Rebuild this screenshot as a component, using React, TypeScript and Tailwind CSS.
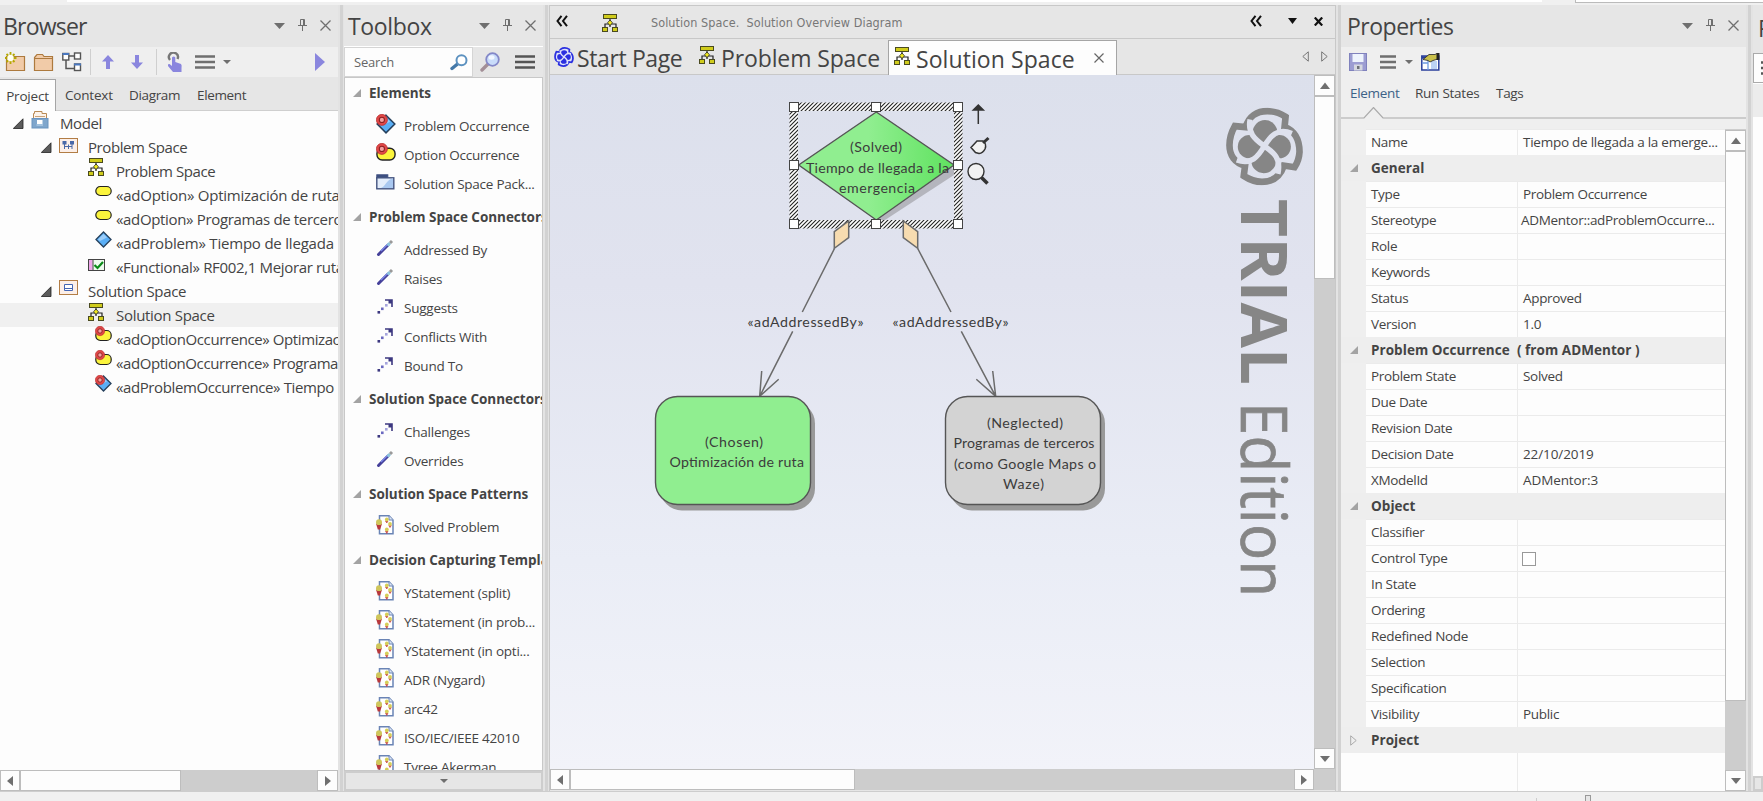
import React from "react";
import type { ReactNode } from "react";

/* ---------- small drawings ---------- */

function DiagramIcon({ className = "" }: { className?: string }) {
  return (
    <svg width="17" height="19" viewBox="0 0 17 19" className={`shrink-0 ${className}`}>
      <path d="M8 5v8M3 13v-3h11v3" fill="none" stroke="#222" strokeWidth="1.2" />
      <rect x="1.500" y="0.500" width="13" height="4" fill="#d0cc1c" stroke="#4a4a20" />
      <path d="M8 6l2.500 2.800-2.500 2.800L5.500 8.800z" fill="#f0e820" stroke="#222" strokeWidth="0.800" />
      <rect x="0.500" y="13.500" width="5" height="4" fill="#d0cc1c" stroke="#4a4a20" />
      <rect x="10.500" y="13.500" width="5" height="4" fill="#d0cc1c" stroke="#4a4a20" />
    </svg>
  );
}

function Swirl({ x = 0, y = 0, size, color, gap }: { x?: number; y?: number; size: number; color: string; gap: string }) {
  return (
    <svg x={x} y={y} width={size} height={size} viewBox="76 52 235 235" className="shrink-0">
      <path
        d="M257 80L254 110C284 122 299 150 299 186C298 204 293 218 284 232L252 227C240 262 216 276 186 276C166 276 146 268 131 258L135 227C104 219 88 196 88 166C88 142 96 122 104 108L137 111C146 78 172 63 202 63C222 63 242 70 257 80Z"
        fill={gap}
        stroke={color}
        strokeWidth="20"
      />
      <circle cx="195" cy="127" r="37" fill={color} />
      <circle cx="238" cy="170" r="35" fill={color} />
      <circle cx="191" cy="213" r="37" fill={color} />
      <circle cx="148" cy="170" r="35" fill={color} />
      <path
        d="M150 88C142 128 164 148 193 168C222 188 244 206 234 252M276 130C232 112 212 138 193 168C174 200 154 226 110 210"
        fill="none"
        stroke={gap}
        strokeWidth="16"
      />
    </svg>
  );
}

function Expander({ big = false }: { big?: boolean }) {
  return big ? (
    <svg width="11" height="11" viewBox="0 0 11 11" className="shrink-0">
      <path d="M10 0.800V10.500H0.300z" fill="#5c5c5c" stroke="#222" strokeWidth="0.800" />
    </svg>
  ) : (
    <svg width="8" height="8" viewBox="0 0 8 8" className="shrink-0">
      <path d="M8 0V8H0z" fill="#a3a3a3" />
    </svg>
  );
}

function Tri({ dir, className = "" }: { dir: "up" | "down" | "left" | "right"; className?: string }) {
  const d = { up: "M6 2.500L11 9H1z", down: "M1 3H11L6 9z", left: "M9 1V11L3 6z", right: "M3 1V11L9 6z" }[dir];
  return (
    <svg width="12" height="12" viewBox="0 0 12 12" className={`shrink-0 ${className}`}>
      <path d={d} fill="#6f6f6f" />
    </svg>
  );
}

function Caret({ color = "#6f6f6f", w = 11 }: { color?: string; w?: number }) {
  return (
    <svg width={w} height={w > 8 ? 6 : 4} viewBox="0 0 11 6" preserveAspectRatio="none" className="shrink-0">
      <path d="M0 0H11L5.500 6z" fill={color} />
    </svg>
  );
}

function PanelButtons() {
  return (
    <div className="flex items-center">
      <Caret />
      <svg width="9" height="12" viewBox="0 0 9 12" className="mb-[2px] ml-[13px] shrink-0">
        <path d="M2.500 0.500H6.500V6.500M2.500 0.500V6.500M5.500 0.500V6M0 6.500H9M4.500 7V12" fill="none" stroke="#6f6f6f" />
      </svg>
      <svg width="11" height="11" viewBox="0 0 11 11" className="mb-px ml-[13px] shrink-0">
        <path d="M0.500 0.500L10.500 10.500M10.500 0.500L0.500 10.500" stroke="#6f6f6f" strokeWidth="1.300" />
      </svg>
    </div>
  );
}

function Hamburger({ w, color = "#6f6f6f" }: { w: number; color?: string }) {
  return (
    <svg width={w} height="14" viewBox="0 0 20 14" preserveAspectRatio="none" className="shrink-0">
      <path d="M0 1.500H20M0 7H20M0 12.500H20" stroke={color} strokeWidth="2.600" />
    </svg>
  );
}

function RedDot() {
  return (
    <>
      <circle cx="5" cy="5" r="4.700" fill="#e04848" stroke="#b52a2a" strokeWidth="0.600" />
      <circle cx="5" cy="5" r="2.200" fill="#f4a0a0" stroke="#8c2020" strokeWidth="0.900" />
    </>
  );
}

function OptionIcon({ dot = false, size = 17 }: { dot?: boolean; size?: number }) {
  return (
    <svg width={size} height={size} viewBox="0 0 17 17" className="shrink-0">
      <rect x="0.800" y={dot ? 4.5 : 1.5} width="15.400" height={dot ? 10 : 9} rx="4.500" fill="#fbf43c" stroke="#222" strokeWidth="1.200" />
      {dot && <RedDot />}
    </svg>
  );
}

function ProblemIcon({ dot = false, size = 17 }: { dot?: boolean; size?: number }) {
  return (
    <svg width={size} height={size} viewBox="0 0 17 17" className="shrink-0">
      <path d="M8.500 1L16 8.500L8.500 16L1 8.500z" fill="#5aaef5" stroke="#26405c" strokeWidth="1.300" />
      <path d="M8.500 3L12 6.500L5 10L3 8.500z" fill="#9ccdf9" />
      {dot && <RedDot />}
    </svg>
  );
}

function FunctionalIcon() {
  return (
    <svg width="17" height="13" viewBox="0 0 17 13" className="shrink-0">
      <rect x="0.500" y="0.500" width="16" height="11" fill="#eefbee" stroke="#444" />
      <rect x="1" y="1" width="3.500" height="10" fill="#efa6ea" />
      <path d="M5 1V11.500" stroke="#444" />
      <path d="M6.500 6L9.500 9L15 3" fill="none" stroke="#0a8a18" strokeWidth="2.200" />
    </svg>
  );
}

function ModelIcon() {
  return (
    <svg width="18" height="19" viewBox="0 0 18 19" className="shrink-0">
      <path d="M2.500 10V3.500H3.500V1.500H11V3.500H15.500V10" fill="#fdf3ea" stroke="#b98a55" />
      <path d="M4 6.500H14" stroke="#c9a37a" />
      <rect x="1" y="8.500" width="16" height="9.500" fill="#7fa6cc" stroke="#6a94bf" />
      <rect x="6" y="10" width="5.500" height="4" fill="#fff" />
      <path d="M5.500 15H12" stroke="#c5dcf0" />
    </svg>
  );
}

function PackageIcon({ kind }: { kind: "problem" | "solution" }) {
  return (
    <svg width="19" height="15" viewBox="0 0 19 15" className="shrink-0">
      <rect x="0.500" y="0.500" width="18" height="14" fill="#fcefe8" stroke="#b27d45" />
      {kind === "problem" ? (
        <>
          <rect x="3.500" y="3" width="4" height="3.500" fill="#4a69a8" />
          <rect x="11" y="3" width="4" height="3.500" fill="#4a69a8" />
          <path d="M5.500 6V11M5.500 8.500H13M13 6V11M9.500 8.500V6.500M9.500 8.500V11" fill="none" stroke="#4a69a8" />
        </>
      ) : (
        <path d="M5.500 4.500H13.500V10.500H5.500zM5.500 8.500H13.500" fill="#fff" stroke="#4466b5" />
      )}
    </svg>
  );
}

function FolderIcon({ star = false }: { star?: boolean }) {
  return (
    <svg width="21" height="20" viewBox="0 0 21 20" className="shrink-0">
      {star ? (
        <path d="M1.500 18.500V4.500H19.500V18.500z" fill="#f1cba8" stroke="#ad7a3e" strokeWidth="1.200" />
      ) : (
        <path d="M1.500 18.500V5.500L4 2.500H9.500L11 4.500H19.500V18.500zM2 6.500H19" fill="#f1cba8" stroke="#ad7a3e" strokeWidth="1.200" />
      )}
      {star && (
        <>
          <path d="M5.500 0V12M-0.500 6H11.500M1.500 2L9.500 10M9.500 2L1.500 10" stroke="#b5a800" strokeWidth="1.800" />
          <circle cx="5.500" cy="6" r="3.200" fill="#fffef0" />
        </>
      )}
    </svg>
  );
}

function StickIcon() {
  return (
    <svg width="18" height="18" viewBox="0 0 18 18" className="shrink-0">
      <path d="M2.500 15.500L12 6" stroke="#45409a" strokeWidth="3" strokeLinecap="round" />
      <path d="M5 12L12 5" stroke="#7a86e8" strokeWidth="1.200" />
      <path d="M11.500 6.500L14 4" stroke="#8cc4dd" strokeWidth="3" />
      <path d="M14 4L16 2" stroke="#9a9a9a" strokeWidth="3" />
    </svg>
  );
}

function DotsIcon() {
  return (
    <svg width="18" height="18" viewBox="0 0 18 18" className="shrink-0">
      <rect x="1.500" y="14" width="2.600" height="2.600" fill="#3c3880" />
      <rect x="5" y="10.500" width="2.600" height="2.600" fill="#6a68c0" />
      <rect x="9" y="7" width="2.600" height="2.600" fill="#a5a4dc" />
      <path d="M9 3H16V10" fill="none" stroke="#3c3880" strokeWidth="1.600" />
      <rect x="12.500" y="3" width="3.500" height="3.500" fill="#3c3880" />
    </svg>
  );
}

function SolutionPackIcon() {
  return (
    <svg width="19" height="16" viewBox="0 0 19 16" className="shrink-0">
      <rect x="0.800" y="0.800" width="11" height="4" fill="#3d4f80" stroke="#3d4f80" />
      <rect x="0.800" y="3.800" width="17" height="11" fill="#e3edfb" stroke="#43537f" strokeWidth="1.400" />
      <path d="M17 4.500V14H5C9 13 11 5 17 4.500z" fill="#a9c8f0" />
    </svg>
  );
}

function PatternIcon() {
  return (
    <svg width="18" height="20" viewBox="0 0 18 20" className="shrink-0">
      <path d="M3.500 0.800H13L17 5V18.800H3.500z" fill="#fff" stroke="#6a84b5" strokeWidth="1.500" />
      <path d="M13 0.800V5H17" fill="#dbe5f5" stroke="#6a84b5" />
      <path d="M0 8.500H6L4.200 14.500H1.800z" fill="#b8383c" />
      <ellipse cx="3" cy="7.200" rx="3" ry="2.900" fill="#cfc65a" />
      <path d="M9.500 6H12L10.800 8zM12.800 10.500H15.300L14 12.500zM9.500 16H12L10.800 18.500z" fill="#c83c40" stroke="#c83c40" strokeWidth="0.600" />
      <circle cx="10.800" cy="4.500" r="1.900" fill="#d6cf58" />
      <circle cx="14" cy="9" r="1.900" fill="#d6cf58" />
      <circle cx="10.800" cy="14.500" r="1.900" fill="#d6cf58" />
    </svg>
  );
}

function Magnifier({ fancy = false }: { fancy?: boolean }) {
  return fancy ? (
    <svg width="20" height="20" viewBox="0 0 20 20" className="shrink-0">
      <path d="M2 18L9 11" stroke="#a38f97" strokeWidth="3.400" strokeLinecap="round" />
      <circle cx="12.500" cy="7.500" r="6.300" fill="#c9dcfa" stroke="#8488c8" strokeWidth="1.800" />
      <ellipse cx="11.500" cy="5.500" rx="3" ry="2.200" fill="#f2f7ff" />
    </svg>
  ) : (
    <svg width="18" height="17" viewBox="0 0 18 17" className="shrink-0">
      <path d="M2 14.500L7.500 10" stroke="#4478a8" strokeWidth="3.400" strokeLinecap="round" />
      <circle cx="11.500" cy="6.300" r="5" fill="#fff" stroke="#5d92c0" strokeWidth="2" />
    </svg>
  );
}

/* ---------- shared pieces ---------- */

function PanelTitle({ text, className = "" }: { text: string; className?: string }) {
  return (
    <div className="flex h-[42px] shrink-0 items-center justify-between bg-[#e6e6e6] pr-[7px]">
      <span className={`text-[23px] leading-[30px] ${className}`}>{text}</span>
      <PanelButtons />
    </div>
  );
}

function Splitter({ className = "" }: { className?: string }) {
  return (
    <div className={`flex shrink-0 bg-[#e3e3e3] ${className}`}>
      <div className="ml-[2px] w-[3px] bg-[#d2d2d2]" />
    </div>
  );
}

function ScrollButton({ dir, className = "" }: { dir: "up" | "down" | "left" | "right"; className?: string }) {
  return (
    <div className={`flex shrink-0 items-center justify-center border border-[#bdbdbd] bg-[#fdfdfd] ${className}`}>
      <Tri dir={dir} />
    </div>
  );
}

/* ---------- browser ---------- */

type TreeRow = { pad: string; iconW: string; icon: ReactNode; text: string; open?: boolean; selected?: boolean; width?: string };

const tree: TreeRow[] = [
  { pad: "pl-[13px]", iconW: "w-[29px] pb-2", icon: <ModelIcon />, text: "Model", open: true },
  { pad: "pl-[41px]", iconW: "w-[29px] pb-[3px]", icon: <PackageIcon kind="problem" />, text: "Problem Space", open: true },
  { pad: "pl-[88px]", iconW: "w-[28px] pb-2", icon: <DiagramIcon />, text: "Problem Space" },
  { pad: "pl-[95px]", iconW: "w-[21px] pb-[4px]", icon: <OptionIcon />, text: "«adOption» Optimización de ruta", width: "tracking-[-0.24px]" },
  { pad: "pl-[95px]", iconW: "w-[21px] pb-[4px]", icon: <OptionIcon />, text: "«adOption» Programas de terceros", width: "tracking-[-0.34px]" },
  { pad: "pl-[95px]", iconW: "w-[21px] pb-[8px]", icon: <ProblemIcon />, text: "«adProblem» Tiempo de llegada", width: "tracking-[-0.2px]" },
  { pad: "pl-[88px]", iconW: "w-[28px] pb-[4px]", icon: <FunctionalIcon />, text: "«Functional» RF002,1 Mejorar rutas", width: "tracking-[-0.34px]" },
  { pad: "pl-[41px]", iconW: "w-[29px] pb-[7px]", icon: <PackageIcon kind="solution" />, text: "Solution Space", open: true, width: "tracking-[-0.34px]" },
  { pad: "pl-[88px]", iconW: "w-[28px] pb-[5px]", icon: <DiagramIcon />, text: "Solution Space", selected: true, width: "tracking-[-0.3px]" },
  { pad: "pl-[95px]", iconW: "w-[21px] pb-[9px]", icon: <OptionIcon dot />, text: "«adOptionOccurrence» Optimización", width: "tracking-[-0.4px]" },
  { pad: "pl-[95px]", iconW: "w-[21px] pb-[9px]", icon: <OptionIcon dot />, text: "«adOptionOccurrence» Programas", width: "tracking-[-0.42px]" },
  { pad: "pl-[95px]", iconW: "w-[21px] pb-[8px]", icon: <ProblemIcon dot />, text: "«adProblemOccurrence» Tiempo", width: "tracking-[-0.4px]" },
];

function Browser() {
  return (
    <section className="flex w-[338px] shrink-0 flex-col bg-[#fdfdfd]">
      <PanelTitle text="Browser" className="pl-[3px] tracking-[-0.8px]" />
      <div className="flex h-[30px] shrink-0 items-center bg-[#efefef] pr-[13px] pl-[5px]">
        <FolderIcon star />
        <span className="w-[7px]" />
        <FolderIcon />
        <svg width="20" height="20" viewBox="0 0 20 20" className="ml-[8px] shrink-0">
          <path d="M7 4H12M4 7V16.500H12" fill="none" stroke="#555" strokeWidth="1.500" />
          <rect x="0.800" y="1.500" width="6" height="6.500" fill="#fff" stroke="#555" strokeWidth="1.400" />
          <rect x="12.500" y="1" width="6" height="6" fill="#fff" stroke="#555" strokeWidth="1.400" />
          <rect x="12.500" y="12" width="6" height="6.500" fill="#fff" stroke="#555" strokeWidth="1.400" />
          <path d="M0.500 2H7M12 12.500H19" stroke="#4a78c0" strokeWidth="2" />
        </svg>
        <span className="ml-[8px] h-[26px] w-px bg-[#cfcfcf]" />
        <svg width="12" height="14" viewBox="0 0 12 14" className="ml-[11px] shrink-0">
          <path d="M6 0L12 6.500H8V14H4V6.500H0z" fill="#8a86de" />
        </svg>
        <svg width="12" height="14" viewBox="0 0 12 14" className="ml-[17px] shrink-0">
          <path d="M6 14L12 7.500H8V0H4V7.500H0z" fill="#8a86de" />
        </svg>
        <span className="ml-[13px] h-[26px] w-px bg-[#cfcfcf]" />
        <svg width="16" height="20" viewBox="0 0 16 20" className="ml-[10px] shrink-0">
          <path d="M3 8A4.500 4.500 0 1 1 10.500 7" fill="none" stroke="#777" strokeWidth="2.400" />
          <path d="M5 5.500Q6.800 3.500 8.300 5.500V10L14 12Q15 13 14.500 16V20H6L1 14Q0.500 11.500 2.500 12L5 14z" fill="#8a86de" />
        </svg>
        <span className="w-[12px]" />
        <Hamburger w={20} />
        <span className="w-[8px]" />
        <Caret w={8} />
        <svg width="10" height="18" viewBox="0 0 10 18" className="ml-auto shrink-0">
          <path d="M0 0L10 9L0 18z" fill="#8a86de" />
        </svg>
      </div>
      <div className="flex h-[34px] shrink-0 items-end bg-[#e6e6e6] text-[13.5px] leading-[18px]">
        <div className="flex h-[32px] w-[56px] items-center justify-center border-t border-r border-[#a5a5a5] bg-[#fdfdfd] pt-px tracking-[-0.2px]">
          Project
        </div>
        <div className="flex h-[32px] flex-1 items-center border-b border-[#cfcfcf] pl-[9px]">
          <span className="w-[64px] tracking-[-0.2px]">Context</span>
          <span className="w-[68px] tracking-[-0.35px]">Diagram</span>
          <span className="tracking-[-0.35px]">Element</span>
        </div>
      </div>
      <div className="flex min-h-0 flex-1 flex-col overflow-hidden text-[15px]">
        {tree.map((r, i) => (
          <div key={i} className={`flex h-[24px] shrink-0 items-center whitespace-nowrap ${r.pad} ${r.selected ? "bg-[#f0f0f0]" : ""}`}>
            {r.open && (
              <span className="w-[18px] shrink-0">
                <Expander big />
              </span>
            )}
            <span className={`flex shrink-0 items-center ${r.iconW}`}>{r.icon}</span>
            <span className={`leading-[22px] ${r.width ?? "tracking-[-0.42px]"}`}>{r.text}</span>
          </div>
        ))}
      </div>
      <div className="flex h-[21px] shrink-0 bg-[#cdcdcd]">
        <ScrollButton dir="left" className="w-[20px]" />
        <div className="w-[161px] border border-[#bdbdbd] bg-[#fdfdfd]" />
        <ScrollButton dir="right" className="ml-auto w-[21px]" />
      </div>
    </section>
  );
}

/* ---------- toolbox ---------- */

const toolGroups: { title: string; first?: boolean; items: [ReactNode, string][] }[] = [
  {
    title: "Elements",
    first: true,
    items: [
      [<ProblemIcon dot size={20} />, "Problem Occurrence"],
      [<OptionIcon dot size={20} />, "Option Occurrence"],
      [<SolutionPackIcon />, "Solution Space Pack..."],
    ],
  },
  {
    title: "Problem Space Connectors",
    items: [
      [<StickIcon />, "Addressed By"],
      [<StickIcon />, "Raises"],
      [<DotsIcon />, "Suggests"],
      [<DotsIcon />, "Conflicts With"],
      [<DotsIcon />, "Bound To"],
    ],
  },
  {
    title: "Solution Space Connectors",
    items: [
      [<DotsIcon />, "Challenges"],
      [<StickIcon />, "Overrides"],
    ],
  },
  { title: "Solution Space Patterns", items: [[<PatternIcon />, "Solved Problem"]] },
  {
    title: "Decision Capturing Templates",
    items: [
      [<PatternIcon />, "YStatement (split)"],
      [<PatternIcon />, "YStatement (in prob..."],
      [<PatternIcon />, "YStatement (in opti..."],
      [<PatternIcon />, "ADR (Nygard)"],
      [<PatternIcon />, "arc42"],
      [<PatternIcon />, "ISO/IEC/IEEE 42010"],
      [<PatternIcon />, "Tyree Akerman"],
    ],
  },
];

function Toolbox() {
  return (
    <section className="flex w-[199px] shrink-0 flex-col bg-[#e6e6e6]">
      <div className="flex h-[42px] shrink-0 items-center justify-between border-b border-white bg-[#e6e6e6] pr-[7px] pl-[4px]">
        <span className="pt-px text-[23px] leading-[30px] tracking-[-0.35px]">Toolbox</span>
        <PanelButtons />
      </div>
      <div className="flex h-[30px] shrink-0 items-center">
        <div className="flex h-[30px] w-[129px] items-center justify-between border border-[#d5d5d5] bg-[#fdfdfd] pr-[4px] pl-[9px] text-[13px] tracking-[-0.2px] text-[#666]">
          <span className="pt-px">Search</span>
          <Magnifier />
        </div>
        <span className="w-[7px]" />
        <Magnifier fancy />
        <span className="w-[15px]" />
        <Hamburger w={20} color="#555" />
      </div>
      <div className="flex min-h-0 flex-1 flex-col overflow-hidden border border-[#c8c8c8] bg-[#fdfdfd] text-[13.5px]">
        {toolGroups.map((g) => (
          <div key={g.title} className="shrink-0">
            <div
              className={`flex items-center pl-[8px] font-bold whitespace-nowrap tracking-[-0.04px] ${g.first ? "h-[33px] pb-[3px]" : "h-[37px]"}`}
            >
              <Expander />
              <span className="ml-[8px] leading-[20px]">{g.title}</span>
            </div>
            {g.items.map(([icon, text]) => (
              <div key={text} className="flex h-[29px] items-center whitespace-nowrap">
                <span className="flex w-[59px] shrink-0 items-center pb-[3px] pl-[31px]">{icon}</span>
                <span className="leading-[20px] tracking-[-0.24px]">{text}</span>
              </div>
            ))}
          </div>
        ))}
      </div>
      <div className="flex h-[20px] shrink-0 items-center justify-center border-2 border-[#cdcdcd] bg-[#e6e6e6]">
        <Caret w={8} />
      </div>
    </section>
  );
}

/* ---------- diagram editor ---------- */

function Chevrons() {
  return (
    <svg width="13" height="12" viewBox="0 0 13 12" className="shrink-0">
      <path d="M5.500 0.800L1.500 6L5.500 11.200M11 0.800L7 6L11 11.200" fill="none" stroke="#111" strokeWidth="2" />
    </svg>
  );
}

type Label = [string, number, number, number];

const labels: Label[] = [
  ["(Solved)", 850, 152, 52],
  ["Tiempo de llegada a la", 806, 173, 143],
  ["emergencia", 839, 193, 76],
  ["«adAddressedBy»", 747.5, 327, 116],
  ["«adAddressedBy»", 892.5, 327, 116],
  ["(Chosen)", 705, 447, 58],
  ["Optimización de ruta", 669.5, 467, 134.5],
  ["(Neglected)", 987, 428, 76],
  ["Programas de terceros", 953.5, 448, 141],
  ["(como Google Maps o", 954, 469, 142],
  ["Waze)", 1003, 489, 41],
];

function Canvas() {
  const handles = [794, 876, 958].flatMap((x) => [107, 165, 224].map((y) => [x, y])).filter(([x, y]) => !(x === 876 && y === 165));
  return (
    <svg width="764" height="694" viewBox="550 75 764 694" className="block shrink-0">
      <defs>
        <linearGradient id="sky" x1="0" y1="0" x2="0" y2="1">
          <stop offset="0" stopColor="#dce0ec" />
          <stop offset="0.3" stopColor="#e1e3ef" />
          <stop offset="0.7" stopColor="#eaedf6" />
          <stop offset="1" stopColor="#f2f3f9" />
        </linearGradient>
        <linearGradient id="solved" x1="0" y1="0" x2="1" y2="0">
          <stop offset="0.45" stopColor="#90ee90" />
          <stop offset="1" stopColor="#5fe25f" />
        </linearGradient>
        <pattern id="hatch" width="4" height="4" patternUnits="userSpaceOnUse">
          <rect width="4" height="4" fill="#fff" />
          <path d="M-1 1L1 -1M0 4L4 0M3 5L5 3" stroke="#222" strokeWidth="1.100" />
        </pattern>
      </defs>
      <rect x="550" y="75" width="764" height="694" fill="url(#sky)" />

      <Swirl x={1225.5} y={107.5} size={78} color="#868686" gap="#dee1ed" />
      <g fill="#868686" fontFamily="'Open Sans', 'Noto Sans', sans-serif" fontSize="64">
        <text transform="translate(1240.5 199) rotate(90)" fontWeight="700" textLength="186" lengthAdjust="spacingAndGlyphs">
          TRIAL
        </text>
        <text
          transform="translate(1240.5 402) rotate(90)"
          stroke="#868686"
          strokeWidth="0.700"
          textLength="195"
          lengthAdjust="spacingAndGlyphs"
        >
          Edition
        </text>
      </g>

      <path d="M881 118L954 170V175L885 220H876z" fill="#b4b5bd" />
      <path d="M876.300 112L954 165L876.300 220L798.700 165z" fill="url(#solved)" stroke="#555" strokeWidth="1.400" />
      <path d="M789.500 102.500H962.500V228.500H789.500zM798 111V220H954V111z" fill="url(#hatch)" fillRule="evenodd" />

      <g fill="none" stroke="#6b6b6b" strokeWidth="1.500">
        <path d="M834.500 248.500L802.300 312M792.700 331.300L759.700 396.300M761.700 371L759.700 396.300L778.700 379.300" />
        <path d="M917.700 248.500L951 312M961.300 331.300L995.700 396.300M992.700 371L995.700 396.300L976.300 379.300" />
        <path d="M848.700 221V237.700L834.300 248.300V231.700z" fill="#f7dcb0" />
        <path d="M903.300 221L917.700 231.700V248.300L903.300 237.700z" fill="#f7dcb0" />
      </g>
      {handles.map(([x, y]) => (
        <rect key={`${x}-${y}`} x={x - 4.5} y={y - 4.5} width="9" height="9" fill="#fff" stroke="#444" />
      ))}

      <rect x="660" y="401.500" width="155" height="109" rx="22" fill="#999" />
      <rect x="655.500" y="396.500" width="155" height="108" rx="22" fill="#90ee90" stroke="#555" strokeWidth="1.400" />
      <rect x="950" y="401.500" width="155" height="109" rx="22" fill="#999" />
      <rect x="945.500" y="396.500" width="155" height="108" rx="22" fill="#d3d3d3" stroke="#555" strokeWidth="1.400" />

      <g fill="#3c3c3c" fontFamily="Lato, 'Open Sans', sans-serif" fontSize="14.200">
        {labels.map(([t, x, y, w], i) => (
          <text key={i} x={x} y={y} textLength={w} lengthAdjust="spacing">
            {t}
          </text>
        ))}
      </g>

      <path d="M978.300 124V107M973.300 110L978.300 105L983.300 110z" stroke="#333" strokeWidth="1.500" fill="#333" />
      <path d="M971 147.500L977 141L983 141Q987 144 985 149Q983 153 979 153.500L975.500 152.500z" fill="#f2f2f2" stroke="#333" strokeWidth="1.500" />
      <path d="M983 143L988.500 138" stroke="#333" strokeWidth="3" />
      <path d="M981.500 177.500L987.500 183.500" stroke="#333" strokeWidth="3.600" />
      <circle cx="976" cy="171.500" r="8" fill="#f2f2f2" stroke="#333" strokeWidth="1.400" />
    </svg>
  );
}

function Editor() {
  return (
    <section className="flex w-[787px] shrink-0 flex-col border-x border-t border-[#c8c8c8] bg-[#e6e6e6]">
      <div className="flex h-[33px] shrink-0 items-center border-b border-[#c8c8c8] pr-[12px] pb-[2px] pl-[6px]">
        <Chevrons />
        <DiagramIcon className="mt-[5px] ml-[33px]" />
        <span className="mt-[5px] ml-[32px] font-['DejaVu_Sans_Condensed','Open_Sans',sans-serif] text-[12.5px] whitespace-pre text-[#777] tracking-[0.07px]">
          {"Solution Space.  Solution Overview Diagram"}
        </span>
        <span className="flex-1" />
        <Chevrons />
        <span className="w-[25px]" />
        <Caret color="#111" w={9} />
        <svg width="9" height="9" viewBox="0 0 9 9" className="ml-[17px] shrink-0">
          <path d="M0.800 0.500L8.200 8.500M8.200 0.500L0.800 8.500" stroke="#111" strokeWidth="2.200" />
        </svg>
      </div>
      <div className="flex h-[36px] shrink-0 text-[23px] leading-[30px]">
        <div className="flex items-center border-b border-[#c8c8c8] pl-[4px]">
          <Swirl size={20} color="#2a2fe0" gap="#dfe2fb" />
          <span className="ml-[3px] w-[121px] pt-[2px] tracking-[-0.38px]">Start Page</span>
          <DiagramIcon className="mr-[5px] mb-[3px] ml-px" />
          <span className="w-[167px] pt-[2px] tracking-[-0.12px]">Problem Space</span>
        </div>
        <div className="mt-px flex w-[229px] items-center border-x border-t border-[#a5a5a5] bg-[#fdfdfd] pl-[5px]">
          <DiagramIcon className="mr-[5px] mb-[3px]" />
          <span className="pt-[2px] tracking-[0.08px]">Solution Space</span>
          <svg width="10" height="10" viewBox="0 0 10 10" className="ml-[19px] shrink-0">
            <path d="M0.500 0.500L9.500 9.500M9.500 0.500L0.500 9.500" stroke="#666" strokeWidth="1.200" />
          </svg>
        </div>
        <div className="flex flex-1 items-center justify-end gap-[12px] border-b border-[#c8c8c8] pr-[7px]">
          <svg width="7" height="11" viewBox="0 0 7 11">
            <path d="M6.300 0.800V10.200L0.800 5.500z" fill="none" stroke="#777" />
          </svg>
          <svg width="7" height="11" viewBox="0 0 7 11">
            <path d="M0.700 0.800V10.200L6.200 5.500z" fill="none" stroke="#777" />
          </svg>
        </div>
      </div>
      <div className="flex h-[694px] shrink-0 bg-[#cdcdcd]">
        <Canvas />
        <div className="flex w-[21px] flex-col">
          <ScrollButton dir="up" className="h-[21px]" />
          <div className="h-[183px] border border-[#bdbdbd] bg-[#fdfdfd]" />
          <ScrollButton dir="down" className="mt-auto h-[21px]" />
        </div>
      </div>
      <div className="flex h-[21px] shrink-0 bg-[#cdcdcd]">
        <ScrollButton dir="left" className="w-[20px]" />
        <div className="w-[285px] border border-[#bdbdbd] bg-[#fdfdfd]" />
        <ScrollButton dir="right" className="mr-[21px] ml-auto w-[20px]" />
      </div>
    </section>
  );
}

/* ---------- properties ---------- */

type Prop = { k: string; v?: ReactNode; head?: boolean; closed?: boolean };

const props: Prop[] = [
  { k: "Name", v: <span className="tracking-[-0.25px]">Tiempo de llegada a la emerge...</span> },
  { k: "General", head: true },
  { k: "Type", v: "Problem Occurrence" },
  { k: "Stereotype", v: <span className="-ml-[2px] tracking-[-0.3px]">ADMentor::adProblemOccurre...</span> },
  { k: "Role" },
  { k: "Keywords" },
  { k: "Status", v: "Approved" },
  { k: "Version", v: "1.0" },
  { k: "Problem Occurrence  ( from ADMentor )", head: true },
  { k: "Problem State", v: "Solved" },
  { k: "Due Date" },
  { k: "Revision Date" },
  { k: "Decision Date", v: <span className="tracking-[-0.1px]">22/10/2019</span> },
  { k: "XModelId", v: <span className="tracking-[-0.1px]">ADMentor:3</span> },
  { k: "Object", head: true },
  { k: "Classifier" },
  { k: "Control Type", v: <span className="-ml-px block h-[14px] w-[14px] border border-[#999] bg-white" /> },
  { k: "In State" },
  { k: "Ordering" },
  { k: "Redefined Node" },
  { k: "Selection" },
  { k: "Specification" },
  { k: "Visibility", v: "Public" },
  { k: "Project", head: true, closed: true },
];

function Properties() {
  return (
    <section className="flex w-[405px] shrink-0 flex-col bg-[#efefef]">
      <PanelTitle text="Properties" className="pl-[6px] tracking-[-0.5px]" />
      <div className="flex h-[30px] shrink-0 items-center pl-[8px]">
        <svg width="18" height="18" viewBox="0 0 18 18" className="shrink-0">
          <rect x="0.500" y="0.500" width="17" height="17" fill="#9c9dd2" stroke="#8082bd" />
          <rect x="3.500" y="1" width="11" height="8" fill="#eef4fd" />
          <rect x="5" y="11.500" width="8.500" height="6" fill="#d5d8e0" />
          <rect x="8" y="13" width="2.500" height="3" fill="#6d7078" />
        </svg>
        <span className="w-[13px]" />
        <Hamburger w={16} />
        <span className="w-[9px]" />
        <Caret w={8} />
        <svg width="19" height="18" viewBox="0 0 19 18" className="ml-[8px] shrink-0">
          <rect x="0.800" y="3" width="17" height="14" fill="#fff" stroke="#2a3f9c" strokeWidth="1.500" />
          <path d="M1 4.500H18" stroke="#2a3f9c" strokeWidth="2.500" />
          <path d="M7 6V17M1 10H7" stroke="#6f9be0" strokeWidth="1.300" />
          <rect x="10" y="8" width="6" height="8" fill="#bcd3f5" />
          <path d="M2 6.500L8 1.500H14L17 0V6L12 7.500L9 9L7 7.500z" fill="#c9c04a" stroke="#333" strokeWidth="0.900" />
          <path d="M15.500 0H18.500V7H15.500z" fill="#222" />
        </svg>
      </div>
      <div className="flex h-[30px] shrink-0 items-center pt-[2px] pl-[9px] text-[13.5px]">
        <span className="w-[65px] tracking-[-0.3px] text-[#3d6287]">Element</span>
        <span className="w-[81px] tracking-[-0.25px]">Run States</span>
        <span className="tracking-[-0.3px]">Tags</span>
      </div>
      <svg width="405" height="22" viewBox="0 0 405 22" className="block shrink-0">
        <path d="M0 11H23L32.500 0.500L42 11H405" fill="none" stroke="#aaa" strokeWidth="1.200" />
      </svg>
      <div className="flex min-h-0 flex-1 text-[13.5px]">
        <div className="flex w-[384px] flex-col">
          {props.map((p) =>
            p.head ? (
              <div key={p.k} className="flex h-[26px] shrink-0 items-center bg-[#eeeeee] pl-[9px] font-bold whitespace-pre">
                <span className="w-[21px]">
                  {p.closed ? (
                    <svg width="7" height="11" viewBox="0 0 7 11">
                      <path d="M0.700 0.800V10.200L6.200 5.500z" fill="none" stroke="#aaa" />
                    </svg>
                  ) : (
                    <Expander />
                  )}
                </span>
                <span className="pt-px tracking-[0.05px]">{p.k}</span>
              </div>
            ) : (
              <div key={p.k} className="flex h-[26px] shrink-0 pl-[25px] tracking-[-0.32px] whitespace-nowrap">
                <span className="flex w-[152px] items-center border-t border-r border-[#ebebeb] bg-[#fdfdfd] pl-[5px]">{p.k}</span>
                <span className="flex flex-1 items-center border-t border-[#ebebeb] bg-[#fdfdfd] pl-[5px]">{p.v}</span>
              </div>
            ),
          )}
          <div className="flex flex-1 bg-[#fdfdfd]">
            <div className="w-[177px] border-r border-[#ebebeb]" />
          </div>
        </div>
        <div className="flex w-[21px] flex-col bg-[#cdcdcd]">
          <ScrollButton dir="up" className="mt-px h-[21px]" />
          <div className="h-[550px] border border-[#bdbdbd] bg-[#fdfdfd]" />
          <ScrollButton dir="down" className="mt-auto h-[21px]" />
        </div>
      </div>
    </section>
  );
}

/* ---------- page ---------- */

export default function App() {
  return (
    <div className="flex h-[801px] w-[1763px] flex-col overflow-hidden bg-[#f0f0f0] font-['Open_Sans','Noto_Sans',sans-serif] text-[#444]">
      <div className="flex h-[5px] shrink-0">
        <div className="ml-[67px] h-[2px] w-[1475px] bg-white" />
        <div className="ml-[33px] h-[3px] flex-1 border-b border-l border-[#bbb] bg-white" />
      </div>
      <div className="flex h-[786px] shrink-0">
        <Browser />
        <Splitter className="w-[6px]" />
        <Toolbox />
        <Splitter className="w-[6px]" />
        <Editor />
        <Splitter className="w-[5px]" />
        <Properties />
        <Splitter className="w-[7px]" />
        <section className="flex min-w-0 flex-1 flex-col overflow-hidden bg-[#fdfdfd]">
          <div className="flex h-[48px] shrink-0 items-center bg-[#e6e6e6] pb-[2px] pl-[5px] text-[23px] leading-[30px]">P</div>
          <div className="flex h-[30px] shrink-0 items-center border border-r-0 border-[#aaa] bg-[#fdfdfd] pl-[7px]">
            <Hamburger w={16} color="#555" />
          </div>
          <div className="mt-px h-[33px] shrink-0 bg-[#ececec]" />
          <div className="flex-1" />
          <div className="h-[15px] shrink-0 border-2 border-[#cdcdcd] bg-[#e6e6e6]" />
        </section>
      </div>
      <div className="flex h-[10px] shrink-0 items-end border-t border-[#cdcdcd] bg-[#f0f0f0]">
        <div className="ml-[1536px] h-[3px] w-px bg-[#ccc]" />
        <div className="ml-[48px] h-[6px] w-[6px] border border-b-0 border-[#999] bg-[#e6e6e6]" />
      </div>
    </div>
  );
}
